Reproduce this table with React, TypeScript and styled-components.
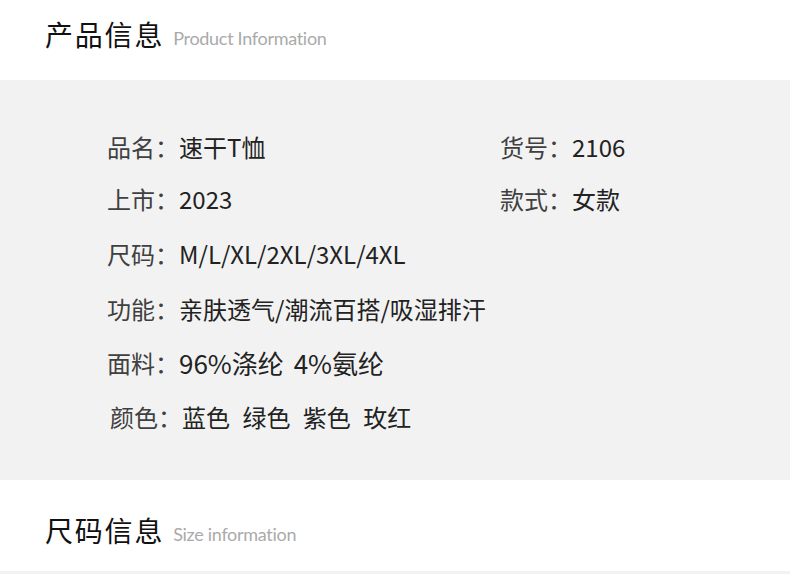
import React from "react"
import styled, { createGlobalStyle } from "styled-components"

const GlobalStyle = createGlobalStyle`
  html, body {
    margin: 0;
    padding: 0;
    background: #fff;
  }
  body {
    font-family: "Noto Sans CJK SC", "Noto Sans", sans-serif;
  }
`

interface Spec {
  label: string
  value: string
  wide?: boolean
  spacing?: number
  indent?: number
  size?: number
}

const specs: Spec[] = [
  { label: "品名", value: "速干T恤" },
  { label: "货号", value: "2106" },
  { label: "上市", value: "2023" },
  { label: "款式", value: "女款" },
  { label: "尺码", value: "M/L/XL/2XL/3XL/4XL", wide: true },
  { label: "功能", value: "亲肤透气/潮流百搭/吸湿排汗", wide: true },
  { label: "面料", value: "96%涤纶 4%氨纶", wide: true, spacing: 4, size: 26 },
  { label: "颜色", value: "蓝色 绿色 紫色 玫红", wide: true, spacing: 7, indent: 3 },
]

export default function App() {
  return (
    <Page>
      <GlobalStyle />
      <SectionHeader $height={80} $shift={-6}>
        <Title>产品信息</Title>
        <Subtitle>Product Information</Subtitle>
      </SectionHeader>

      <Panel>
        <SpecGrid>
          {specs.map(s => (
            <SpecItem key={s.label} $wide={s.wide} $spacing={s.spacing ?? 0} $indent={s.indent ?? 0}>
              <Label>{s.label}：</Label>
              <Value $size={s.size ?? 24}>{s.value}</Value>
            </SpecItem>
          ))}
        </SpecGrid>
      </Panel>

      <SectionHeader $height={91} $shift={4}>
        <Title>尺码信息</Title>
        <Subtitle>Size information</Subtitle>
      </SectionHeader>
      <Strip />
    </Page>
  )
}

const Page = styled.div`
  width: 790px;
  height: 574px;
  overflow: hidden;
`

const SectionHeader = styled.div<{ $height: number; $shift: number }>`
  height: ${p => p.$height}px;
  padding-left: 45px;
  display: flex;
  align-items: center;
  gap: 9px;
  box-sizing: border-box;
  padding-top: ${p => Math.max(p.$shift, 0) * 2}px;
  padding-bottom: ${p => Math.max(-p.$shift, 0) * 2}px;
`

const Title = styled.h2`
  margin: 0;
  font-size: 28px;
  font-weight: 400;
  color: #111;
  letter-spacing: 1.8px;
`

const Subtitle = styled.span`
  font-family: Lato, "Open Sans", sans-serif;
  font-size: 18px;
  color: #aaa;
  margin-top: 8px;
  letter-spacing: -0.3px;
`

const Panel = styled.div`
  background: #f2f2f2;
  height: 400px;
  box-sizing: border-box;
  padding: 40px 0 0 107px;
`

const SpecGrid = styled.div`
  display: grid;
  grid-template-columns: 393px 1fr;
  grid-template-rows: 52px 53px 56px 54px 54px 54px;
`

const SpecItem = styled.div<{ $wide?: boolean; $spacing: number; $indent: number }>`
  grid-column: ${p => (p.$wide ? "1 / -1" : "auto")};
  display: flex;
  align-items: center;
  color: #333;
  font-size: 24px;
  padding-left: ${p => p.$indent}px;
  word-spacing: ${p => p.$spacing}px;
`

const Label = styled.span`
  color: #404040;
`

const Value = styled.span<{ $size: number }>`
  color: #222;
  font-size: ${p => p.$size}px;
`

const Strip = styled.div`
  height: 3px;
  background: #f2f2f2;
`
